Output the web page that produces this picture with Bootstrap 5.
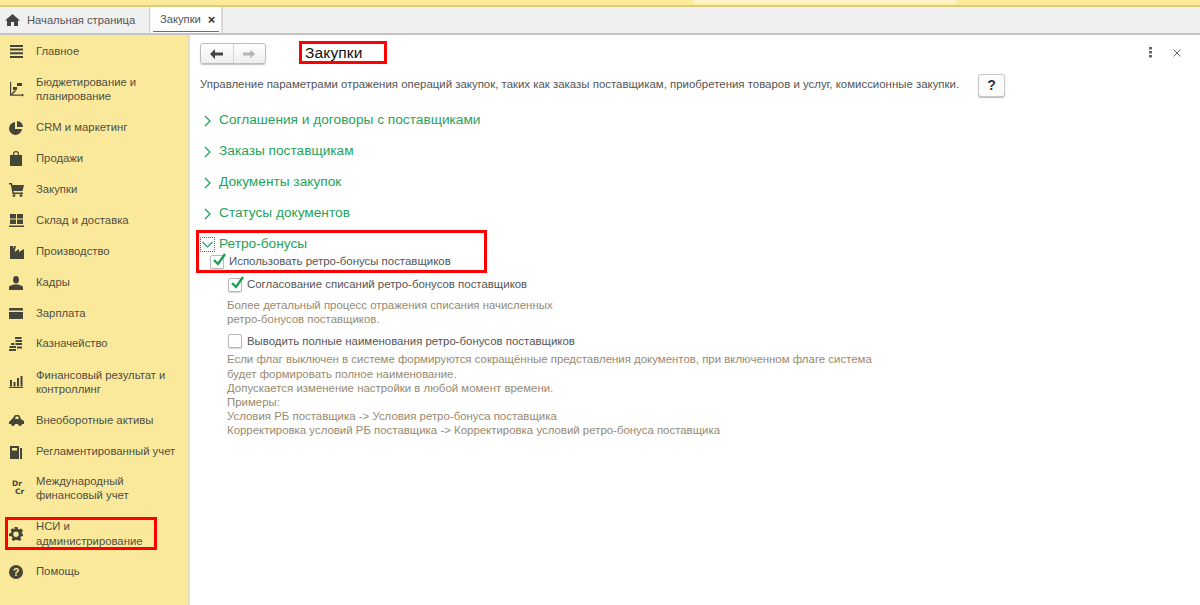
<!DOCTYPE html>
<html lang="ru"><head><meta charset="utf-8"><title>Закупки</title>
<link href="https://cdn.jsdelivr.net/npm/bootstrap@5.3.0/dist/css/bootstrap.min.css" rel="stylesheet">
<style>
html,body{height:605px;overflow:hidden;background:#fff}
body{font-family:"Liberation Sans",Arial,sans-serif;font-size:11.43px;color:#555}
.topline{height:7px;background:#fce999;border-bottom:2px solid #dccd78}
.topglow{width:264px;height:4px;background:#fdf3c8;margin-left:693px;border-radius:0 0 2px 2px}
.tabbar{height:28px;background:#f0f0f0;border-bottom:2px solid #c4c4c4}
.tabhome{width:150px;padding-left:5px;gap:7px;border-right:1px solid #d0d0d0;font-size:11.2px}
.tabopen{width:72px;background:#fff;border-right:2px solid #d8d8d8;margin-left:1px;padding:0 3px 1px 9px;position:relative;font-size:11.2px}
.tabopen::after{content:"";position:absolute;left:2px;right:2px;bottom:1px;height:1px;background:#1f9d58}
.tabx{margin-left:7px;color:#333;font-size:13px;line-height:1;font-weight:700}
.mainarea{height:570px}
.sidemenu{width:190px;background:#fbe99b;border-right:2px solid #e5e0c2;flex:none}
.menuitem{height:31px;color:#4f4f42;font-size:11.3px;line-height:14.5px}
.menuitem.first{padding-top:2px}
.menuitem.tall{height:46px}
.menuitem.trim{margin-top:-1px}
.menuitem.intl{height:44px;margin-top:-1px}
.menuicon{width:36px;flex:none;padding-left:9px}
.menuicon svg{display:block;fill:#454538}
.menumark{position:relative;margin-top:8px}
.menumark::after{content:"";position:absolute;left:5px;top:-1px;width:152px;height:33px;border:3px solid #f00}
.menuhelp{margin-top:7px}
.drcr{font-family:"DejaVu Sans",sans-serif;font-weight:700;font-size:7.5px;line-height:8.5px;color:#454538}
.drcr span{display:block;padding-left:3px}
.drcr span+span{padding-left:6px}
.contentpane{padding:6px 0 0 10px;min-width:0}
.toprow{height:23px}
.navgroup{width:66px;height:21px;margin-top:2px;border:1px solid #bdbdbd;border-radius:3px;background:linear-gradient(#fff,#eee);box-shadow:0 1px 1px #c4c4c4}
.navgroup span{flex:1;height:100%}
.navgroup span+span{border-left:1px solid #d5d5d5}
.pagetitle{margin-left:33px;width:88px;height:23px;border:3px solid #f00;font-size:15.5px;color:#111;line-height:18px;padding-left:3px;letter-spacing:.15px}
.topicons{margin-left:auto;margin-top:6px;width:32px;height:11px;gap:21px;margin-right:19px}
.intro{height:24px;margin-top:9px;margin-bottom:8px}
.helpbtn{width:27px;height:23px;margin-left:19px;border:1px solid #c8c8c8;border-radius:3px;background:#fbfbfb;box-shadow:0 1px 1px #bbb;font-size:14px;color:#333;font-weight:700;text-align:center;line-height:20px}
.grouprow{height:31px;color:#1fa35c;font-size:13.7px;gap:8px;padding-left:4px}
.retrobox{width:291px;height:43px;border:3px solid #f00;margin:1px 0 0 -4px;padding:2px 0 0 1px}
.retrotitle{color:#1fa35c;font-size:13.7px;height:18px;gap:4px}
.dotted{width:15px;height:15px;border:1px dotted #666;flex:none}
.retrocheck{height:18px;gap:5px;margin-left:10px}
.cb{width:14px;height:14px;border:1px solid #b9b9b9;border-radius:2px;background:#fff;position:relative;flex:none;box-shadow:0 1px 1px #d4d4d4}
.cb svg{position:absolute;left:1px;top:-3px}
.subblock{margin:3px 0 0 27px}
.cbrow{height:18px;gap:5px;margin-left:1px}
.cbrow.second{margin-top:6px}
.hintline{color:#968a72;line-height:14.2px;margin-top:4px}
.hintline.second{margin-top:2px}
</style></head><body>
<div class="topline"><div class="topglow"></div></div>
<div class="tabbar d-flex">
  <div class="tabhome d-flex align-items-center">
    <svg width="15" height="12" viewBox="0 0 15 12"><path d="M7.500 0 0 6.500h2V12h4V8h3v4h4V6.500h2z" fill="#444"/></svg>
    <span>Начальная страница</span>
  </div>
  <div class="tabopen d-flex align-items-center"><span>Закупки</span><span class="tabx">×</span></div>
</div>
<div class="mainarea d-flex">
<nav class="sidemenu">
  <div class="menuitem first d-flex align-items-center"><span class="menuicon"><svg width="15" height="13" viewBox="0 0 15 13"><path d="M1 0h13v2H1zM1 3.600h13v2H1zM1 7.300h13v2H1zM1 11h13v2H1z"/></svg></span>Главное</div>
  <div class="menuitem tall d-flex align-items-center"><span class="menuicon"><svg width="15" height="15" viewBox="0 0 15 15"><path d="M1 0h1.200v12.500H13v-1l2 1.600-2 1.600v-1H1z"/><path d="M8 1h5v3H8zM4 5h4v3H4z"/><path d="m2 12 4-4 1 1-4 4z"/></svg></span><span>Бюджетирование и<br>планирование</span></div>
  <div class="menuitem d-flex align-items-center"><span class="menuicon"><svg width="14" height="14" viewBox="0 0 14 14"><path d="M6 1a6.500 6.500 0 1 0 7 7H6z"/><path d="M8 0v6h6a6 6 0 0 0-6-6z"/></svg></span>CRM и маркетинг</div>
  <div class="menuitem d-flex align-items-center"><span class="menuicon"><svg width="14" height="15" viewBox="0 0 14 15"><path d="M1 4h12v11H1zM4 4V2.500a3 2.500 0 0 1 6 0V4H8.800V2.500a1.800 1.300 0 0 0-3.600 0V4z"/></svg></span>Продажи</div>
  <div class="menuitem d-flex align-items-center"><span class="menuicon"><svg width="15" height="14" viewBox="0 0 15 14"><path d="M0 0h3l.5 2H15l-1.500 6H4.500l.3 1.500H14V11H3.500L1.800 1.500H0z"/><circle cx="5" cy="12.600" r="1.400"/><circle cx="12" cy="12.600" r="1.400"/></svg></span>Закупки</div>
  <div class="menuitem d-flex align-items-center"><span class="menuicon"><svg width="15" height="14" viewBox="0 0 15 14"><path d="M1 0h6v4.500H1zM8 0h6v4.500H8zM1 5.500h6V10H1zM8 5.500h6V10H8zM0 11.500h15V13H0z"/></svg></span>Склад и доставка</div>
  <div class="menuitem d-flex align-items-center"><span class="menuicon"><svg width="15" height="14" viewBox="0 0 15 14"><path d="M1 14V1h3v3l1-3h2L5.500 7 10 4v3l5-3v10z"/></svg></span>Производство</div>
  <div class="menuitem d-flex align-items-center"><span class="menuicon"><svg width="14" height="14" viewBox="0 0 14 14"><ellipse cx="7" cy="3.800" rx="3" ry="3.800"/><path d="M0 14v-2.500C0 9.500 3 9 5 8.500h4c2 .5 5 1 5 3V14z"/></svg></span>Кадры</div>
  <div class="menuitem d-flex align-items-center"><span class="menuicon"><svg width="14" height="11" viewBox="0 0 14 11"><path d="M1 0h12a1 1 0 0 1 1 1v1.500H0V1a1 1 0 0 1 1-1zM0 4h14v6a1 1 0 0 1-1 1H1a1 1 0 0 1-1-1z"/></svg></span>Зарплата</div>
  <div class="menuitem trim d-flex align-items-center"><span class="menuicon"><svg width="13" height="14" viewBox="0 0 13 14"><path d="M6 0h6.500v2H6zM6.500 3H13v2H6.500zM6.500 6H13v2H6.500zM2 6h3.500v2H2zM.5 9H7v2H.5zM8 9.500h5v2H8zM0 12h7v2H0z"/></svg></span>Казначейство</div>
  <div class="menuitem tall d-flex align-items-center"><span class="menuicon"><svg width="14" height="12" viewBox="0 0 14 12"><path d="M1 4h2v6.500H1zM4.500 6h2v4.500h-2zM8 2h2v8.500H8zM11.500 0h2v10.500h-2zM0 11h14v1H0z"/></svg></span><span>Финансовый результат и<br>контроллинг</span></div>
  <div class="menuitem d-flex align-items-center"><span class="menuicon"><svg width="15" height="12" viewBox="0 0 15 12"><path d="M0 7l4-4 2-3h4l2 4 3 2v3h-2a2 2 0 0 1-4 0H6a2 2 0 0 1-4 0H0zM7 1.500 6 4h4L9 1.500z"/></svg></span>Внеоборотные активы</div>
  <div class="menuitem d-flex align-items-center"><span class="menuicon"><svg width="14" height="14" viewBox="0 0 14 14"><path d="M1 1h9v13H1zM11 3h2v11h-2z"/><path d="M3 3h5v2.500H3z" fill="#fbe99b"/></svg></span>Регламентированный учет</div>
  <div class="menuitem intl d-flex align-items-center"><span class="menuicon drcr"><span>Dr</span><span>Cr</span></span><span>Международный<br>финансовый учет</span></div>
  <div class="menuitem d-flex align-items-center menumark"><span class="menuicon"><svg width="14" height="14" viewBox="0 0 14 14"><path fill-rule="evenodd" d="M5.500 0h3l.4 2 1.300.6L12 1.500l2 2.300-1.200 1.600.4 1.300L14 7v2l-2 .5-.6 1.300 1 1.700-2 1.500-1.600-1H6.200l-1.700 1-2-1.500 1-1.700-.6-1.300L0 9V6.500l2-.5.5-1.300-1-1.700 2-1.700 1.700 1 .5-.3zM7 4.500a2.700 2.700 0 1 0 0 5.400 2.700 2.700 0 0 0 0-5.400z"/></svg></span><span>НСИ и<br>администрирование</span></div>
  <div class="menuitem d-flex align-items-center menuhelp"><span class="menuicon"><svg width="14" height="14" viewBox="0 0 14 14"><circle cx="7" cy="7" r="7"/><text x="7" y="11" font-size="11" font-weight="700" text-anchor="middle" fill="#fbe99b" font-family="Liberation Sans">?</text></svg></span>Помощь</div>
</nav>
<main class="contentpane flex-grow-1">
  <div class="toprow d-flex align-items-start">
    <div class="navgroup d-flex">
      <span class="d-flex align-items-center justify-content-center"><svg width="13" height="10" viewBox="0 0 13 10"><path d="M0 5l5-5v3.500h8v3H5V10z" fill="#444"/></svg></span>
      <span class="d-flex align-items-center justify-content-center"><svg width="12" height="10" viewBox="0 0 13 10"><path d="M13 5 8 0v3.500H0v3h8V10z" fill="#b5b5b5"/></svg></span>
    </div>
    <div class="pagetitle">Закупки</div>
    <div class="topicons d-flex align-items-center">
      <svg width="3" height="11" viewBox="0 0 3 11"><path d="M0 0h3v2.500H0zM0 4h3v2.500H0zM0 8h3v2.500H0z" fill="#666"/></svg>
      <svg width="8" height="8" viewBox="0 0 8 8"><path d="M.5.500l7 7M7.500.500l-7 7" stroke="#666" fill="none"/></svg>
    </div>
  </div>
  <div class="intro d-flex align-items-center"><span>Управление параметрами отражения операций закупок, таких как заказы поставщикам, приобретения товаров и услуг, комиссионные закупки.</span><span class="helpbtn">?</span></div>
  <div class="grouprow d-flex align-items-center"><svg width="7" height="12" viewBox="0 0 7 12"><path d="m1 1 5 5-5 5" stroke="#1fa35c" stroke-width="1.300" fill="none"/></svg>Соглашения и договоры с поставщиками</div>
  <div class="grouprow d-flex align-items-center"><svg width="7" height="12" viewBox="0 0 7 12"><path d="m1 1 5 5-5 5" stroke="#1fa35c" stroke-width="1.300" fill="none"/></svg>Заказы поставщикам</div>
  <div class="grouprow d-flex align-items-center"><svg width="7" height="12" viewBox="0 0 7 12"><path d="m1 1 5 5-5 5" stroke="#1fa35c" stroke-width="1.300" fill="none"/></svg>Документы закупок</div>
  <div class="grouprow d-flex align-items-center"><svg width="7" height="12" viewBox="0 0 7 12"><path d="m1 1 5 5-5 5" stroke="#1fa35c" stroke-width="1.300" fill="none"/></svg>Статусы документов</div>
  <div class="retrobox">
    <div class="retrotitle d-flex align-items-center"><span class="dotted d-flex align-items-center justify-content-center"><svg width="11" height="7" viewBox="0 0 11 7"><path d="m.5 1 5 5 5-5" stroke="#1fa35c" stroke-width="1.200" fill="none"/></svg></span>Ретро-бонусы</div>
    <div class="retrocheck d-flex align-items-center"><span class="cb"><svg width="15" height="14" viewBox="0 0 15 14"><path d="m2 7 4 4 7-10" stroke="#1f9d58" stroke-width="2.400" fill="none"/></svg></span>Использовать ретро-бонусы поставщиков</div>
  </div>
  <div class="subblock">
    <div class="cbrow d-flex align-items-center"><span class="cb"><svg width="15" height="14" viewBox="0 0 15 14"><path d="m2 7 4 4 7-10" stroke="#1f9d58" stroke-width="2.400" fill="none"/></svg></span>Согласование списаний ретро-бонусов поставщиков</div>
    <div class="hintline">Более детальный процесс отражения списания начисленных<br>ретро-бонусов поставщиков.</div>
    <div class="cbrow second d-flex align-items-center"><span class="cb"></span>Выводить полные наименования ретро-бонусов поставщиков</div>
    <div class="hintline second">Если флаг выключен в системе формируются сокращённые представления документов, при включенном флаге система<br>будет формировать полное наименование.<br>Допускается изменение настройки в любой момент времени.<br>Примеры:<br>Условия РБ поставщика -&gt; Условия ретро-бонуса поставщика<br>Корректировка условий РБ поставщика -&gt; Корректировка условий ретро-бонуса поставщика</div>
  </div>
</main>
</div>
<script src="https://cdn.jsdelivr.net/npm/bootstrap@5.3.0/dist/js/bootstrap.bundle.min.js"></script>
</body></html>
